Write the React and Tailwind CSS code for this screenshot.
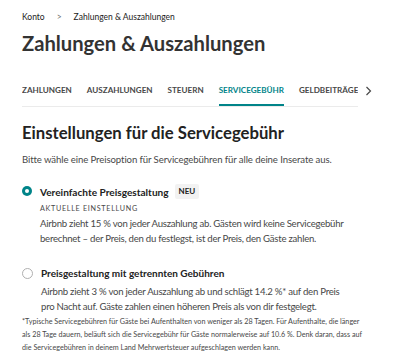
export default function App() {
  const tabs = ["ZAHLUNGEN", "AUSZAHLUNGEN", "STEUERN", "SERVICEGEBÜHR", "GELDBEITRÄGE"];

  return (
    <div className="h-[360px] w-[400px] overflow-hidden bg-white px-[22px] pt-[11px] font-['Lato',sans-serif] text-[#222]">
      <div className="flex items-center gap-[12px] text-[8.5px] leading-[12px] text-[#222]">
        <span>Konto</span>
        <span className="text-[#717171]">&gt;</span>
        <span>Zahlungen &amp; Auszahlungen</span>
      </div>
      <h1 className="mt-[6px] text-[20.2px] font-bold leading-[28px] text-[#333]">Zahlungen &amp; Auszahlungen</h1>

      <div className="mt-[28px] flex items-center">
        <div className="flex w-[336px] gap-[15px] overflow-hidden border-b border-[#ebebeb]">
          {tabs.map((t) => (
            <div
              key={t}
              className={
                t === "SERVICEGEBÜHR"
                  ? "shrink-0 whitespace-nowrap border-b-2 border-[#008489] pb-[9px] text-[8.1px] font-bold leading-[10px] text-[#008489]"
                  : "shrink-0 whitespace-nowrap border-b-2 border-transparent pb-[9px] text-[8.1px] font-bold leading-[10px] text-[#484848]"
              }
            >
              {t}
            </div>
          ))}
        </div>
        <svg className="ml-[7px] mb-[10px]" width="7" height="10" viewBox="0 0 7 10" fill="none">
          <path d="M1.5 1l4 4-4 4" stroke="#484848" strokeWidth="1.2" />
        </svg>
      </div>

      <h2 className="mt-[15px] text-[16.7px] font-bold leading-[22px] text-[#222]">Einstellungen für die Servicegebühr</h2>
      <p className="mt-[9px] text-[9.6px] leading-[14px] tracking-[-0.1px] text-[#484848]">
        Bitte wähle eine Preisoption für Servicegebühren für alle deine Inserate aus.
      </p>

      <div className="mt-[17px] flex gap-[8px]">
        <div className="mt-[2px] flex h-[10px] w-[10px] shrink-0 items-center justify-center rounded-full bg-[#008489]">
          <div className="h-[4px] w-[4px] rounded-full bg-white" />
        </div>
        <div>
          <div className="flex items-center gap-[6px]">
            <span className="text-[10.1px] font-bold leading-[14px] text-[#222]">Vereinfachte Preisgestaltung</span>
            <span className="rounded-[2px] bg-[#f2f2f2] px-[4px] py-[2px] text-[8px] font-bold leading-[11px] text-[#222]">NEU</span>
          </div>
          <div className="mt-[5px] text-[7.2px] leading-[10px] tracking-[0.7px] text-[#484848]">AKTUELLE EINSTELLUNG</div>
          <p className="mt-[2px] w-[335px] text-[9.6px] leading-[15px] tracking-[-0.25px] text-[#484848]">
            Airbnb zieht 15 % von jeder Auszahlung ab. Gästen wird keine Servicegebühr berechnet – der Preis, den du festlegst, ist der Preis, den Gäste zahlen.
          </p>
        </div>
      </div>

      <div className="mt-[20px] flex gap-[8px]">
        <div className="mt-[2px] h-[11px] w-[11px] shrink-0 rounded-full border border-[#b0b0b0] bg-white" />
        <div>
          <div className="text-[10px] font-bold leading-[14px] text-[#222]">Preisgestaltung mit getrennten Gebühren</div>
          <p className="mt-[4px] w-[312px] text-[9.6px] leading-[15px] tracking-[-0.25px] text-[#484848]">
            Airbnb zieht 3 % von jeder Auszahlung ab und schlägt 14.2 %* auf den Preis pro Nacht auf. Gäste zahlen einen höheren Preis als von dir festgelegt.
          </p>
        </div>
      </div>

      <p className="mt-[1px] w-[342px] text-[7.2px] leading-[13px] text-[#484848]">
        *Typische Servicegebühren für Gäste bei Aufenthalten von weniger als 28 Tagen. Für Aufenthalte, die länger als 28 Tage dauern, beläuft sich die Servicegebühr für Gäste normalerweise auf 10.6 %. Denk daran, dass auf die Servicegebühren in deinem Land Mehrwertsteuer aufgeschlagen werden kann.
      </p>
    </div>
  );
}
